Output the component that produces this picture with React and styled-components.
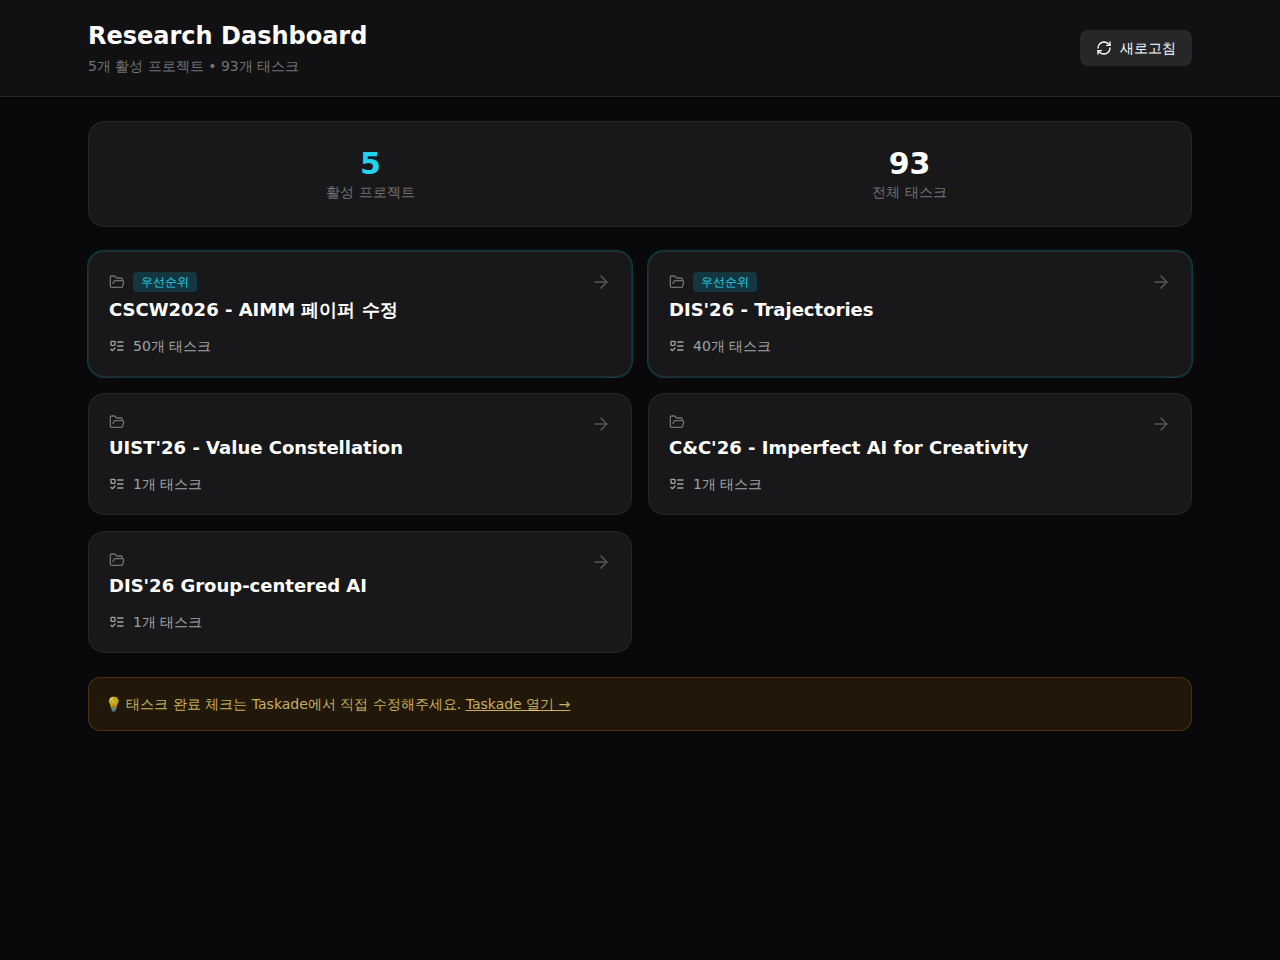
import React from "react";
import styled, { createGlobalStyle, css } from "styled-components";
import { RefreshCw, FolderOpen, ArrowRight } from "lucide-react";

const GlobalStyle = createGlobalStyle`
  *, *::before, *::after { box-sizing: border-box; }
  body {
    margin: 0;
    background: #09090b;
    color: #fff;
    font-family: "DejaVu Sans", sans-serif;
    font-size: 14px;
    line-height: 20px;
  }
  h1, h2, p, dl, dt, dd, ul { margin: 0; padding: 0; }
`;

const Container = styled.div`
  max-width: 1152px;
  margin: 0 auto;
  padding: ${(p) => p.$padY}px 24px;
`;

const Header = styled.header`
  background: #111113;
  border-bottom: 1px solid #27272a;
`;

const HeaderRow = styled.div`
  display: flex;
  align-items: center;
  justify-content: space-between;
`;

const PageTitle = styled.h1`
  font-size: 24px;
  line-height: 32px;
  font-weight: 700;
`;

const Subtitle = styled.p`
  margin-top: 4px;
  color: #717171;
`;

const RefreshButton = styled.button`
  display: flex;
  align-items: center;
  gap: 8px;
  padding: 8px 16px;
  border: 0;
  border-radius: 8px;
  background: #27272a;
  color: #fff;
  font: inherit;
  cursor: pointer;
  &:hover { background: #3f3f46; }
`;

const Main = styled.main`
  display: flex;
  flex-direction: column;
  gap: 24px;
`;

const panel = css`
  background: #18181b;
  border: 1px solid #27272a;
  border-radius: 16px;
`;

const Stats = styled.dl`
  ${panel}
  display: grid;
  grid-template-columns: 1fr 1fr;
  gap: 24px;
  padding: 24px;
  text-align: center;
`;

const Stat = styled.div`
  display: flex;
  flex-direction: column-reverse;
`;

const StatValue = styled.dd`
  font-size: 30px;
  line-height: 36px;
  font-weight: 700;
  color: ${(p) => (p.$accent ? "#22d3ee" : "#fff")};
`;

const StatLabel = styled.dt`
  color: #717171;
`;

const Projects = styled.ul`
  display: grid;
  grid-template-columns: 1fr 1fr;
  gap: 16px;
  list-style: none;
`;

const Card = styled.a`
  ${panel}
  display: flex;
  align-items: flex-start;
  justify-content: space-between;
  padding: 20px;
  color: #525252;
  text-decoration: none;
  ${(p) => p.$priority && "box-shadow: 0 0 0 1px rgba(6, 182, 212, 0.3);"}
  &:hover { border-color: #3f3f46; }
`;

const CardTags = styled.div`
  display: flex;
  align-items: center;
  gap: 8px;
  margin-bottom: 4px;
  color: #717171;
`;

const Badge = styled.span`
  padding: 2px 8px;
  border-radius: 4px;
  background: rgba(6, 182, 212, 0.2);
  color: #22d3ee;
  font-size: 12px;
  line-height: 16px;
`;

const CardTitle = styled.h2`
  margin-bottom: 12px;
  font-size: 18px;
  line-height: 28px;
  font-weight: 600;
  color: #fff;
`;

const TaskCount = styled.p`
  display: flex;
  align-items: center;
  gap: 8px;
  color: #a1a1a1;
`;

const Notice = styled.p`
  padding: 16px;
  border: 1px solid rgba(245, 158, 11, 0.2);
  border-radius: 12px;
  background: rgba(245, 158, 11, 0.1);
`;

const NoticeText = styled.span`
  color: rgba(253, 224, 128, 0.75);
`;

const NoticeLink = styled.a`
  color: inherit;
  text-decoration: underline;
`;

const projects = [
  { name: "CSCW2026 - AIMM 페이퍼 수정", tasks: 50, priority: true },
  { name: "DIS'26 - Trajectories", tasks: 40, priority: true },
  { name: "UIST'26 - Value Constellation", tasks: 1 },
  { name: "C&C'26 - Imperfect AI for Creativity", tasks: 1 },
  { name: "DIS'26 Group-centered AI", tasks: 1 },
];

function TasksIcon() {
  return (
    <svg
      width="16"
      height="16"
      viewBox="0 0 24 24"
      fill="none"
      stroke="currentColor"
      strokeWidth="2"
      strokeLinecap="round"
      strokeLinejoin="round"
      aria-hidden="true"
    >
      <rect x="3" y="5" width="6" height="6" rx="1" />
      <path d="m3 17 2 2 4-4" />
      <path d="M13 6h8" />
      <path d="M13 12h8" />
      <path d="M13 18h8" />
    </svg>
  );
}

function ProjectCard({ project }) {
  return (
    <Card href="#" $priority={project.priority}>
      <div>
        <CardTags>
          <FolderOpen size={16} />
          {project.priority && <Badge>우선순위</Badge>}
        </CardTags>
        <CardTitle>{project.name}</CardTitle>
        <TaskCount>
          <TasksIcon />
          <span>{project.tasks}개 태스크</span>
        </TaskCount>
      </div>
      <ArrowRight size={20} />
    </Card>
  );
}

export default function App() {
  const total = projects.reduce((sum, p) => sum + p.tasks, 0);
  return (
    <>
      <GlobalStyle />
      <Header>
        <Container $padY={20}>
          <HeaderRow>
            <div>
              <PageTitle>Research Dashboard</PageTitle>
              <Subtitle>{`${projects.length}개 활성 프로젝트 • ${total}개 태스크`}</Subtitle>
            </div>
            <RefreshButton type="button">
              <RefreshCw size={16} />
              새로고침
            </RefreshButton>
          </HeaderRow>
        </Container>
      </Header>
      <Container $padY={24}>
        <Main>
          <Stats>
            <Stat>
              <StatLabel>활성 프로젝트</StatLabel>
              <StatValue $accent>{projects.length}</StatValue>
            </Stat>
            <Stat>
              <StatLabel>전체 태스크</StatLabel>
              <StatValue>{total}</StatValue>
            </Stat>
          </Stats>
          <Projects>
            {projects.map((project) => (
              <li key={project.name}>
                <ProjectCard project={project} />
              </li>
            ))}
          </Projects>
          <Notice>
            <NoticeText>
              💡 태스크 완료 체크는 Taskade에서 직접 수정해주세요.{" "}
              <NoticeLink href="#">Taskade 열기 →</NoticeLink>
            </NoticeText>
          </Notice>
        </Main>
      </Container>
    </>
  );
}
